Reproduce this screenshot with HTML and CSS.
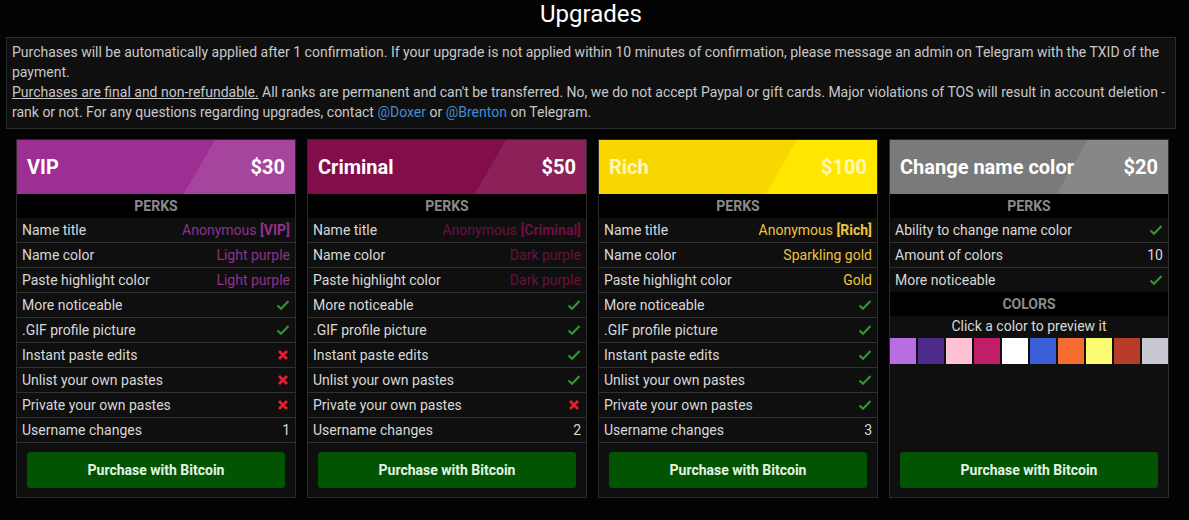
FILE: index.html
```html
<!DOCTYPE html>
<html>
<head>
<meta charset="utf-8">
<link rel="stylesheet" href="styles.css">
</head>
<body>
<h1 class="title">Upgrades</h1>
<div class="notice">
Purchases will be automatically applied after 1 confirmation. If your upgrade is not applied within 10 minutes of confirmation, please message an admin on Telegram with the TXID of the payment.<br>
<span class="u">Purchases are final and non-refundable.</span> All ranks are permanent and can't be transferred. No, we do not accept Paypal or gift cards. Major violations of TOS will result in account deletion - rank or not. For any questions regarding upgrades, contact <a class="lnk">@Doxer</a> or <a class="lnk">@Brenton</a> on Telegram.
</div>

<div class="cards">
  <div class="card">
    <div class="head vip"><span>VIP</span><span>$30</span></div>
    <div class="sect">PERKS</div>
    <div class="row"><span>Name title</span><span class="v-vip">Anonymous <b>[VIP]</b></span></div>
    <div class="row"><span>Name color</span><span class="v-vip">Light purple</span></div>
    <div class="row"><span>Paste highlight color</span><span class="v-vip">Light purple</span></div>
    <div class="row"><span>More noticeable</span><svg class="ic" viewBox="0 0 14 12"><path class="ok" d="M1.5 6.5 L5 9.8 L12.5 2"/></svg></div>
    <div class="row"><span>.GIF profile picture</span><svg class="ic" viewBox="0 0 14 12"><path class="ok" d="M1.5 6.5 L5 9.8 L12.5 2"/></svg></div>
    <div class="row"><span>Instant paste edits</span><svg class="ic" viewBox="0 0 14 12"><path class="no" d="M3 2 L11 10 M11 2 L3 10"/></svg></div>
    <div class="row"><span>Unlist your own pastes</span><svg class="ic" viewBox="0 0 14 12"><path class="no" d="M3 2 L11 10 M11 2 L3 10"/></svg></div>
    <div class="row"><span>Private your own pastes</span><svg class="ic" viewBox="0 0 14 12"><path class="no" d="M3 2 L11 10 M11 2 L3 10"/></svg></div>
    <div class="row"><span>Username changes</span><span>1</span></div>
    <div class="foot"><button class="buy">Purchase with Bitcoin</button></div>
  </div>

  <div class="card">
    <div class="head crim"><span>Criminal</span><span>$50</span></div>
    <div class="sect">PERKS</div>
    <div class="row"><span>Name title</span><span class="v-crim">Anonymous <b>[Criminal]</b></span></div>
    <div class="row"><span>Name color</span><span class="v-crim">Dark purple</span></div>
    <div class="row"><span>Paste highlight color</span><span class="v-crim">Dark purple</span></div>
    <div class="row"><span>More noticeable</span><svg class="ic" viewBox="0 0 14 12"><path class="ok" d="M1.5 6.5 L5 9.8 L12.5 2"/></svg></div>
    <div class="row"><span>.GIF profile picture</span><svg class="ic" viewBox="0 0 14 12"><path class="ok" d="M1.5 6.5 L5 9.8 L12.5 2"/></svg></div>
    <div class="row"><span>Instant paste edits</span><svg class="ic" viewBox="0 0 14 12"><path class="ok" d="M1.5 6.5 L5 9.8 L12.5 2"/></svg></div>
    <div class="row"><span>Unlist your own pastes</span><svg class="ic" viewBox="0 0 14 12"><path class="ok" d="M1.5 6.5 L5 9.8 L12.5 2"/></svg></div>
    <div class="row"><span>Private your own pastes</span><svg class="ic" viewBox="0 0 14 12"><path class="no" d="M3 2 L11 10 M11 2 L3 10"/></svg></div>
    <div class="row"><span>Username changes</span><span>2</span></div>
    <div class="foot"><button class="buy">Purchase with Bitcoin</button></div>
  </div>

  <div class="card">
    <div class="head rich"><span>Rich</span><span>$100</span></div>
    <div class="sect">PERKS</div>
    <div class="row"><span>Name title</span><span class="v-rich">Anonymous <b>[Rich]</b></span></div>
    <div class="row"><span>Name color</span><span class="v-rich">Sparkling gold</span></div>
    <div class="row"><span>Paste highlight color</span><span class="v-rich">Gold</span></div>
    <div class="row"><span>More noticeable</span><svg class="ic" viewBox="0 0 14 12"><path class="ok" d="M1.5 6.5 L5 9.8 L12.5 2"/></svg></div>
    <div class="row"><span>.GIF profile picture</span><svg class="ic" viewBox="0 0 14 12"><path class="ok" d="M1.5 6.5 L5 9.8 L12.5 2"/></svg></div>
    <div class="row"><span>Instant paste edits</span><svg class="ic" viewBox="0 0 14 12"><path class="ok" d="M1.5 6.5 L5 9.8 L12.5 2"/></svg></div>
    <div class="row"><span>Unlist your own pastes</span><svg class="ic" viewBox="0 0 14 12"><path class="ok" d="M1.5 6.5 L5 9.8 L12.5 2"/></svg></div>
    <div class="row"><span>Private your own pastes</span><svg class="ic" viewBox="0 0 14 12"><path class="ok" d="M1.5 6.5 L5 9.8 L12.5 2"/></svg></div>
    <div class="row"><span>Username changes</span><span>3</span></div>
    <div class="foot"><button class="buy">Purchase with Bitcoin</button></div>
  </div>

  <div class="card">
    <div class="head gray"><span>Change name color</span><span>$20</span></div>
    <div class="sect">PERKS</div>
    <div class="row"><span>Ability to change name color</span><svg class="ic" viewBox="0 0 14 12"><path class="ok" d="M1.5 6.5 L5 9.8 L12.5 2"/></svg></div>
    <div class="row"><span>Amount of colors</span><span>10</span></div>
    <div class="row last"><span>More noticeable</span><svg class="ic" viewBox="0 0 14 12"><path class="ok" d="M1.5 6.5 L5 9.8 L12.5 2"/></svg></div>
    <div class="sect">COLORS</div>
    <div class="hint">Click a color to preview it</div>
    <div class="swatches">
      <span class="sw c1"></span><span class="sw c2"></span><span class="sw c3"></span><span class="sw c4"></span><span class="sw c5"></span>
      <span class="sw c6"></span><span class="sw c7"></span><span class="sw c8"></span><span class="sw c9"></span><span class="sw c10"></span>
    </div>
    <div class="foot"><button class="buy">Purchase with Bitcoin</button></div>
  </div>
</div>
</body>
</html>
```

FILE: styles.css
```css
html, body {
  margin: 0;
  padding: 0;
  background: #030303;
  color: #d6d6d6;
  font-family: Roboto, "Liberation Sans", Arial, sans-serif;
  font-size: 14px;
}

.title {
  margin: 0 0 9px 6px;
  width: 1170px;
  font-size: 24px;
  line-height: 28px;
  font-weight: 400;
  color: #fff;
  text-align: center;
}

.notice {
  margin: 0 0 0 6px;
  width: 1158px;
  padding: 4px 5px 6px 5px;
  border: 1px solid #2c2c2c;
  background: #0f0f0f;
  color: #c8c8c8;
  line-height: 20px;
}

.u { text-decoration: underline; }
.lnk { color: #3f8ed6; }

.cards {
  display: grid;
  grid-template-columns: repeat(4, 280px);
  gap: 11px;
  margin: 10px 0 0 16px;
}

.card {
  display: flex;
  flex-direction: column;
  background: #0f0f0f;
  border: 1px solid #2b2b2b;
}

.head {
  height: 54px;
  display: flex;
  align-items: center;
  justify-content: space-between;
  padding: 0 10px 0 10px;
  font-size: 20px;
  font-weight: 700;
  color: #fff;
}
.vip { background: linear-gradient(120deg, #9c2f91 64%, #a6459d 64%); }
.crim { background: linear-gradient(120deg, #810e4b 64%, #8b2158 64%); }
.rich { background: linear-gradient(120deg, #f8d700 64%, #ffe700 64%); color: #fff8b8; }
.gray { background: linear-gradient(120deg, #7a7a7a 64%, #878787 64%); }

.sect {
  height: 24px;
  line-height: 24px;
  background: #000;
  color: #8a8a8a;
  font-weight: 700;
  text-align: center;
}

.row {
  height: 24px;
  display: flex;
  align-items: center;
  justify-content: space-between;
  padding: 0 5px;
  border-bottom: 1px solid #303030;
  color: #d8d8d8;
}
.row.last { border-bottom: none; }

.ic { width: 14px; height: 12px; }
.ok { fill: none; stroke: #2f9a2f; stroke-width: 2; }
.no { fill: none; stroke: #e3202c; stroke-width: 2.8; }

.v-vip { color: #93308d; }
.v-crim { color: #6c0f40; }
.v-rich { color: #ecc43c; }

.hint {
  height: 22px;
  line-height: 20px;
  text-align: center;
  color: #d8d8d8;
}

.swatches {
  display: flex;
  gap: 2px;
  height: 26px;
}
.sw { flex: 1; }
.c1 { background: #b86de3; }
.c2 { background: #4c2b8a; }
.c3 { background: #ffc2d4; }
.c4 { background: #c01f68; }
.c5 { background: #ffffff; }
.c6 { background: #3a5fd9; }
.c7 { background: #f46c2e; }
.c8 { background: #fdfd72; }
.c9 { background: #b73d28; }
.c10 { background: #c8c8d2; }

.foot {
  margin-top: auto;
  padding: 9px 10px 9px;
}

.buy {
  display: block;
  width: 100%;
  height: 36px;
  border: none;
  border-radius: 3px;
  background: #025402;
  color: #e4f4e4;
  font-family: Roboto, "Liberation Sans", Arial, sans-serif;
  font-size: 14px;
  font-weight: 700;
}
```
